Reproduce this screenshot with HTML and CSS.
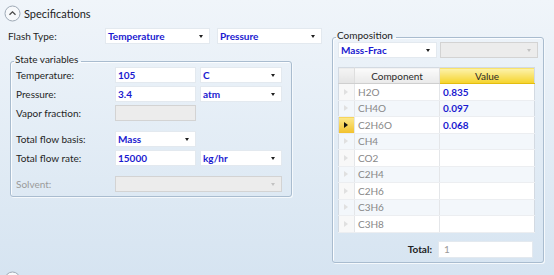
FILE: index.html
```html
<!DOCTYPE html>
<html lang="en">
<head>
    <meta charset="UTF-8">
    <meta name="viewport" content="width=device-width, initial-scale=1.0">
    <title>Specifications</title>
    <link rel="stylesheet" href="styles.css">
</head>
<body>
    <div class="section-head">
        <span class="toggle">
            <svg width="17" height="17" viewBox="0 0 17 17">
                <circle cx="8.5" cy="8.5" r="7.5" fill="#f7f9fb" stroke="#9ea9b5"/>
                <path d="M5.5 9.8 L8.5 6.8 L11.5 9.8" fill="none" stroke="#4a4a4a" stroke-width="1.3"/>
            </svg>
        </span>
        <span class="section-title">Specifications</span>
    </div>

    <div class="spec">
        <div class="left">
            <div class="flash-row">
                <span class="label flash-label">Flash Type:</span>
                <div class="select flash-select"><span class="val">Temperature</span><span class="arrow"></span></div>
                <div class="select flash-select"><span class="val">Pressure</span><span class="arrow"></span></div>
            </div>

            <fieldset class="group state">
                <legend>State variables</legend>
                <div class="row first">
                    <span class="label">Temperature:</span>
                    <div class="input"><span class="val">105</span></div>
                    <div class="select"><span class="val">C</span><span class="arrow"></span></div>
                </div>
                <div class="row">
                    <span class="label">Pressure:</span>
                    <div class="input"><span class="val">3.4</span></div>
                    <div class="select"><span class="val">atm</span><span class="arrow"></span></div>
                </div>
                <div class="row">
                    <span class="label">Vapor fraction:</span>
                    <div class="input disabled"></div>
                </div>
                <div class="row spaced">
                    <span class="label">Total flow basis:</span>
                    <div class="select"><span class="val">Mass</span><span class="arrow"></span></div>
                </div>
                <div class="row">
                    <span class="label">Total flow rate:</span>
                    <div class="input"><span class="val">15000</span></div>
                    <div class="select"><span class="val">kg/hr</span><span class="arrow"></span></div>
                </div>
                <div class="row spaced">
                    <span class="label muted">Solvent:</span>
                    <div class="select disabled span2"><span class="arrow"></span></div>
                </div>
            </fieldset>
        </div>

        <fieldset class="group comp">
            <legend>Composition</legend>
            <div class="comp-selects">
                <div class="select"><span class="val">Mass-Frac</span><span class="arrow"></span></div>
                <div class="select disabled"><span class="arrow"></span></div>
            </div>

            <table class="grid">
                <thead>
                    <tr>
                        <th class="ind"></th>
                        <th class="name">Component</th>
                        <th class="value">Value</th>
                    </tr>
                </thead>
                <tbody>
                    <tr><td class="ind"><span class="tri"></span></td><td class="name">H2O</td><td class="num">0.835</td></tr>
                    <tr><td class="ind"><span class="tri"></span></td><td class="name">CH4O</td><td class="num">0.097</td></tr>
                    <tr class="current"><td class="ind"><span class="tri"></span></td><td class="name">C2H6O</td><td class="num">0.068</td></tr>
                    <tr><td class="ind"><span class="tri"></span></td><td class="name">CH4</td><td class="num"></td></tr>
                    <tr><td class="ind"><span class="tri"></span></td><td class="name">CO2</td><td class="num"></td></tr>
                    <tr><td class="ind"><span class="tri"></span></td><td class="name">C2H4</td><td class="num"></td></tr>
                    <tr><td class="ind"><span class="tri"></span></td><td class="name">C2H6</td><td class="num"></td></tr>
                    <tr><td class="ind"><span class="tri"></span></td><td class="name">C3H6</td><td class="num"></td></tr>
                    <tr><td class="ind"><span class="tri"></span></td><td class="name">C3H8</td><td class="num"></td></tr>
                </tbody>
            </table>

            <div class="total-row">
                <span class="total-label">Total:</span>
                <div class="input total">1</div>
            </div>
        </fieldset>
    </div>

    <div class="section-head next">
        <span class="toggle">
            <svg width="17" height="17" viewBox="0 0 17 17">
                <circle cx="8.5" cy="8.5" r="7.5" fill="#f7f9fb" stroke="#9ea9b5"/>
            </svg>
        </span>
    </div>
</body>
</html>
```

FILE: styles.css
```css
html, body {
    margin: 0;
    padding: 0;
}
body {
    font-family: Lato, "Open Sans", sans-serif;
    font-size: 10px;
    color: #1f1f1f;
    background: linear-gradient(#f0f5fa, #d6e4f1);
    height: 275px;
    overflow: hidden;
}
.section-head {
    display: flex;
    align-items: center;
    gap: 3px;
    height: 18px;
    padding: 4px 0 0 4px;
}
.section-head.next {
    margin-top: 4px;
}
.toggle {
    display: block;
    width: 17px;
    height: 17px;
}
.section-title {
    font-size: 11px;
    color: #222;
}
.spec {
    display: flex;
    align-items: flex-start;
    gap: 10px;
    padding: 0 8px;
}
.left {
    width: 314px;
}
.flash-row {
    display: flex;
    align-items: center;
    gap: 7px;
    height: 16px;
    margin-top: 6px;
}
.flash-label {
    width: 90px;
}
.flash-select {
    width: 105px;
}
.label {
    white-space: nowrap;
}
.label.muted {
    color: #9a9a9a;
}

/* inputs and drop-downs */
.select, .input {
    box-sizing: border-box;
    height: 16px;
    background: #fff;
    border: 1px solid #e3e9ef;
    display: flex;
    align-items: center;
    padding: 0 6px 0 2px;
}
.val {
    flex: 1;
    font-weight: bold;
    color: #1a1ad0;
}
.arrow {
    width: 0;
    height: 0;
    border-left: 2.5px solid transparent;
    border-right: 2.5px solid transparent;
    border-top: 3px solid #1f1f1f;
    margin-left: auto;
}
.select.disabled, .input.disabled {
    background: #ececec;
    border-color: #d3d3d3;
}
.select.disabled .arrow {
    border-top-color: #c2c2c2;
}
.span2 {
    grid-column: span 2;
}

/* group boxes */
.group {
    margin: 0;
    padding: 0 5px 4px;
    border: 1px solid #a9bccf;
    border-radius: 3px;
    box-shadow: inset 1px 1px 0 #fbfdff, 1px 1px 0 #f5f9fc;
}
.group legend {
    padding: 0 3px 4px 1px;
    margin-left: -2px;
    line-height: 12px;
    color: #222;
}
.state {
    box-sizing: border-box;
    width: 282px;
    margin: 9px 0 0 2px;
}
.row {
    display: grid;
    grid-template-columns: 95px 81px 82px;
    column-gap: 4px;
    align-items: center;
    height: 16px;
    margin-top: 3px;
}
.row.first {
    margin-top: -2px;
}
.row.spaced {
    margin-top: 10px;
}

/* composition */
.comp {
    box-sizing: border-box;
    width: 212px;
    margin-top: 7px;
}
.comp-selects {
    display: grid;
    grid-template-columns: 99px 98px;
    gap: 3px;
    margin-top: -3px;
}
.grid {
    width: 197px;
    margin-top: 9px;
    border-collapse: collapse;
    table-layout: fixed;
    background: #fff;
    border: 1px solid #d3dae2;
}
.grid th {
    height: 15px;
    padding: 0;
    font-weight: normal;
    color: #2a2a2a;
    text-align: center;
    background: linear-gradient(#fbfbfb, #e9e9e9);
    border-bottom: 1px solid #cfcfcf;
    border-right: 1px solid #dedede;
}
.grid th.ind {
    width: 15px;
    background: linear-gradient(#f4f4f4, #e4e4e4);
}
.grid th.name {
    width: 84px;
}
.grid th.value {
    background: linear-gradient(#fdf3ae, #f5d329);
    border-bottom-color: #e3bd10;
    border-right: none;
}
.grid td {
    height: 15.5px;
    padding: 0 0 0 3px;
    border-bottom: 1px solid #eceef1;
    border-right: 1px solid #e4e6e9;
}
.grid tbody tr:nth-child(even) td {
    background: #f3f7fb;
}
.grid td.ind {
    padding: 0 0 0 5px;
    background: #f8f8f8;
}
.grid td.name {
    color: #878787;
}
.grid td.num {
    font-weight: bold;
    color: #1a1ad0;
    border-right: none;
}
.tri {
    display: block;
    width: 0;
    height: 0;
    border-top: 3.5px solid transparent;
    border-bottom: 3.5px solid transparent;
    border-left: 4px solid #e0e0e0;
}
.grid tr.current td.ind {
    background: linear-gradient(#fce98c, #f2c12a);
}
.grid tr.current .tri {
    border-left-color: #111;
}
.total-row {
    display: flex;
    justify-content: flex-end;
    align-items: center;
    gap: 6px;
    width: 195px;
    margin-top: 8px;
}
.total-label {
    color: #222;
    font-weight: bold;
}
.input.total {
    width: 95px;
    height: 17px;
    color: #9a9a9a;
    padding-left: 5px;
}
```
